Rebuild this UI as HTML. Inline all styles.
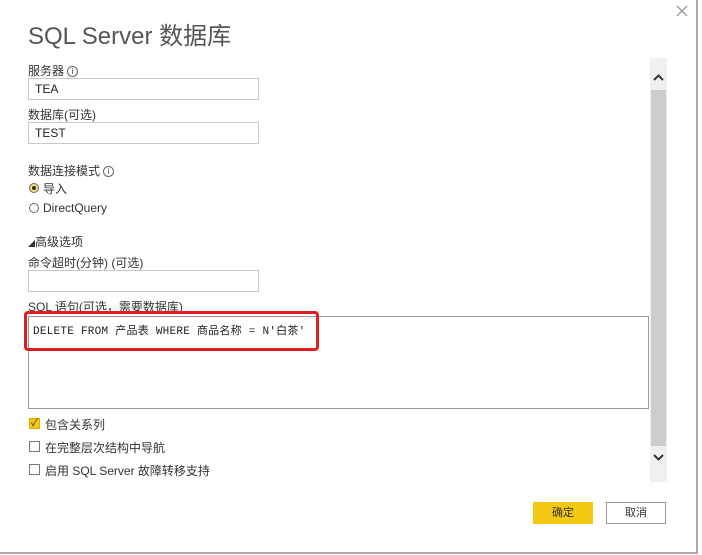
<!DOCTYPE html>
<html><head><meta charset="utf-8"><style>
*{margin:0;padding:0;box-sizing:border-box}
body{width:702px;height:555px;background:#fff;position:relative;overflow:hidden;font-family:"Liberation Sans","Noto Sans CJK SC",sans-serif;color:#333;font-size:12px}
.a{position:absolute;white-space:nowrap}
.inp{position:absolute;border:1px solid #c8c8c8;background:#fff;height:22px;padding:3px 6px;font-size:12px;color:#222}
.info{display:inline-block;width:11px;height:11px;border:1px solid #666;border-radius:50%;font-size:8px;line-height:9px;text-align:center;vertical-align:middle;margin-left:3px}
.cb{position:absolute;width:11px;height:11px;border:1px solid #777;background:#fff}
</style></head><body>
<div class="a" style="right:4px;top:552px;left:0;height:2px;background:#aaa"></div>
<div class="a" style="left:696px;top:0;width:2px;height:554px;background:#aaa"></div>
<svg class="a" style="left:676px;top:5px" width="12" height="12"><path d="M1 1L11 11M11 1L1 11" stroke="#999" stroke-width="1.3"/></svg>
<div class="a" style="left:28px;top:16px;font-size:24px;color:#555">SQL Server 数据库</div>
<div class="a" style="left:28px;top:62px">服务器<span class="info">i</span></div>
<div class="inp" style="left:28px;top:78px;width:231px">TEA</div>
<div class="a" style="left:28px;top:106px">数据库(可选)</div>
<div class="inp" style="left:28px;top:122px;width:231px">TEST</div>
<div class="a" style="left:28px;top:162px">数据连接模式<span class="info">i</span></div>
<div class="a" style="left:29px;top:183px;width:10px;height:10px;border:1px solid #666;border-radius:50%;background:#f5e27a"><div style="width:4px;height:4px;background:#333;border-radius:50%;margin:2px"></div></div>
<div class="a" style="left:43px;top:180px">导入</div>
<div class="a" style="left:29px;top:203px;width:10px;height:10px;border:1px solid #666;border-radius:50%"></div>
<div class="a" style="left:43px;top:201px">DirectQuery</div>
<div class="a" style="left:28px;top:233px"><span style="font-size:7px">◢</span>高级选项</div>
<div class="a" style="left:28px;top:254px">命令超时(分钟) (可选)</div>
<div class="inp" style="left:28px;top:270px;width:231px"></div>
<div class="a" style="left:28px;top:298px">SQL 语句(可选，需要数据库)</div>
<div class="inp" style="left:28px;top:316px;width:621px;height:93px;border-color:#999"></div>
<div class="a" style="left:24px;top:311px;width:295px;height:40px;border:3px solid #e02020;border-radius:4px"></div>
<div class="a" style="left:33px;top:322px;font-family:'Liberation Mono','Noto Sans CJK SC',monospace;font-size:11px;letter-spacing:0.25px;color:#222">DELETE FROM 产品表 WHERE 商品名称 = N'白茶'</div>
<div class="cb" style="left:29px;top:418px;background:#f2c811;border-color:#d8b000;font-size:10px;line-height:9px;color:#333;text-align:center">✓</div>
<div class="a" style="left:45px;top:416px">包含关系列</div>
<div class="cb" style="left:29px;top:441px"></div>
<div class="a" style="left:45px;top:439px">在完整层次结构中导航</div>
<div class="cb" style="left:29px;top:464px"></div>
<div class="a" style="left:45px;top:462px">启用 SQL Server 故障转移支持</div>
<div class="a" style="left:650px;top:58px;width:17px;height:424px;background:#f0f0f0"></div>
<div class="a" style="left:651px;top:90px;width:15px;height:356px;background:#cdcdcd"></div>
<svg class="a" style="left:652px;top:73px" width="13" height="9"><path d="M2 7L6.5 2.5L11 7" stroke="#333" stroke-width="2" fill="none"/></svg>
<svg class="a" style="left:652px;top:453px" width="13" height="9"><path d="M2 2L6.5 6.5L11 2" stroke="#333" stroke-width="2" fill="none"/></svg>
<div class="a" style="left:533px;top:502px;width:60px;height:22px;background:#f2c811;text-align:center;line-height:22px;font-size:11px">确定</div>
<div class="a" style="left:606px;top:502px;width:60px;height:22px;border:1px solid #999;text-align:center;line-height:20px;font-size:11px">取消</div>
</body></html>
